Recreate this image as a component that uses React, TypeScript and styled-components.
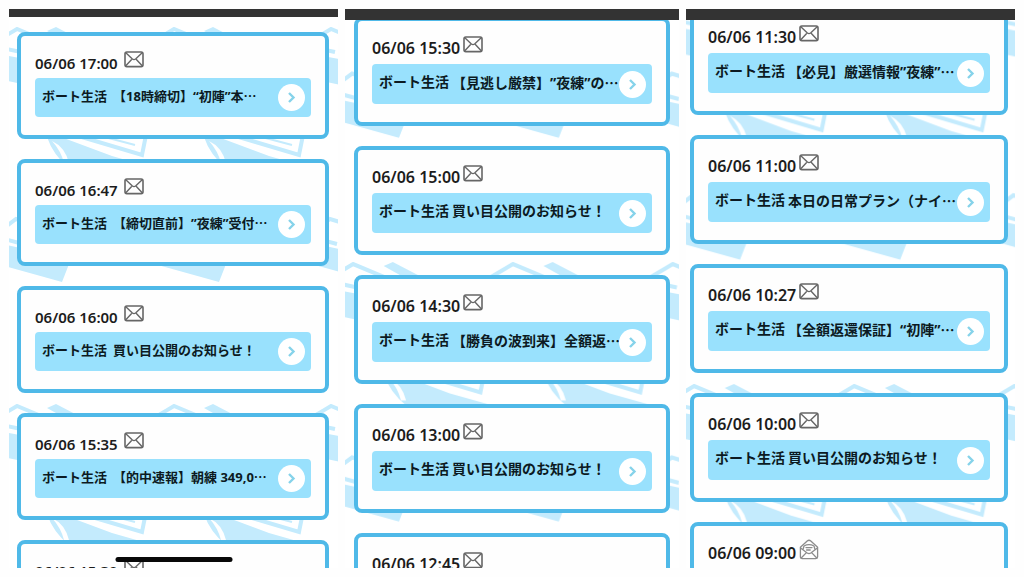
import React, { useId } from "react";
import styled, { createGlobalStyle } from "styled-components";

type Mail = { time: string; subject?: string; cut?: boolean; opened?: boolean };
type Density = "compact" | "regular";

const GlobalStyle = createGlobalStyle`
  * { box-sizing: border-box; }
  body { margin: 0; background: #fefefe; }
`;

const Page = styled.main`
  display: grid;
  grid-template-columns: 329fr 334fr 329fr;
  gap: 7px;
  height: 100vh;
  padding: 9px;
  font-family: "Noto Sans", "Noto Sans CJK JP", sans-serif;
  color: #1c1c1c;
`;

const Screen = styled.section`
  position: relative;
  display: flex;
  flex-direction: column;
  min-width: 0;
  min-height: 0;
  overflow: hidden;
  background: #ffffff;
`;

const Backdrop = styled.svg`
  position: absolute;
  inset: 0;
  width: 100%;
  height: 100%;
`;

const TopBar = styled.div<{ $height: number }>`
  position: relative;
  z-index: 1;
  flex: none;
  height: ${(p) => p.$height}px;
  background: #333333;
`;

const MailList = styled.ul<{ $top: number; $left: number; $right: number }>`
  position: relative;
  flex: none;
  display: flex;
  flex-direction: column;
  gap: 20px;
  margin: ${(p) => p.$top}px ${(p) => p.$right}px 0 ${(p) => p.$left}px;
  padding: 0;
  list-style: none;
`;

const Card = styled.li`
  min-height: 107px;
  padding: 12px 14px 18px;
  border: 4px solid #4fb9e8;
  border-radius: 8px;
  background: #fefefe;
`;

const DateRow = styled.div<{ $density: Density }>`
  display: flex;
  align-items: flex-start;
  gap: ${(p) => (p.$density === "compact" ? 6 : 3)}px;
  height: ${(p) => (p.$density === "compact" ? 30 : 31)}px;
`;

const Stamp = styled.time<{ $density: Density }>`
  padding-top: 5px;
  font-size: ${(p) => (p.$density === "compact" ? 15 : 16)}px;
  line-height: 20px;
  font-weight: 600;
  white-space: nowrap;
`;

const IconSlot = styled.span<{ $opened?: boolean }>`
  display: flex;
  padding-top: ${(p) => (p.$opened ? 1 : 3)}px;
`;

const SubjectLink = styled.a<{ $density: Density }>`
  display: flex;
  align-items: center;
  justify-content: space-between;
  height: ${(p) => (p.$density === "compact" ? 39 : 40)}px;
  padding: 0 6px 0 7px;
  border-radius: 4px;
  background: #99e1fd;
  color: #0c1a22;
  text-decoration: none;
`;

const Title = styled.span<{ $density: Density }>`
  display: flex;
  gap: ${(p) => (p.$density === "compact" ? 6 : 3)}px;
  min-width: 0;
  padding-bottom: 4px;
  font-size: ${(p) => (p.$density === "compact" ? 13 : 14)}px;
  line-height: 20px;
  font-weight: 700;
  white-space: nowrap;
  text-spacing-trim: space-all;
`;

const Dots = styled.span`
  font-family: "Noto Sans CJK JP", sans-serif;
`;

const Arrow = styled.span`
  display: flex;
  flex: none;
  align-items: center;
  justify-content: center;
  width: 27px;
  height: 27px;
  border-radius: 50%;
  background: #ffffff;
`;

const HomeIndicator = styled.div`
  position: absolute;
  bottom: 6px;
  left: 50%;
  width: 117px;
  height: 5px;
  border-radius: 3px;
  background: #080808;
  transform: translateX(-50%);
`;

function ClosedMail() {
  return (
    <svg width="20" height="17" viewBox="0 0 20 17" fill="none" stroke="#666" strokeWidth="1.6" strokeLinecap="round" strokeLinejoin="round" aria-hidden="true">
      <rect x="1" y="1" width="18" height="14.6" rx="1.8" />
      <path d="M1.8 1.8 8.4 8q1.6 1.3 3.2 0L18.2 1.8M1.8 14.8l5.6-6M18.2 14.8l-5.6-6" strokeWidth="1.4" />
    </svg>
  );
}

function OpenedMail() {
  return (
    <svg width="20" height="21" viewBox="0 0 20 21" fill="none" stroke="#8c8c8c" strokeWidth="1.3" strokeLinecap="round" strokeLinejoin="round" aria-hidden="true">
      <path d="M1.4 8.2 8.2 2q1.8-1.5 3.6 0l6.8 6.2v9.6q0 1.8-1.8 1.8H3.2q-1.8 0-1.8-1.8z" />
      <path d="M4 10.6 5 7q5-2.6 10 0l1 3.6M1.6 9l6.6 5q1.8 1.2 3.6 0l6.6-5M2.2 19l5.2-5.4M17.8 19l-5.2-5.4" />
      <path d="M7 8.6h6M7.6 11h3.6" />
    </svg>
  );
}

function Chevron() {
  return (
    <svg width="9" height="13" viewBox="0 0 9 13" fill="none" stroke="#86d3ea" strokeWidth="2.4" aria-hidden="true">
      <path d="M2 2 6.5 6.5 2 11" />
    </svg>
  );
}

function Books() {
  return (
    <g>
      <g fill="none" stroke="#c4ebfd" strokeWidth="4">
        <path d="M-14 15 8 2 44 17" />
        <path d="M-12 20 12 25" />
        <path d="M-12 206 7 192 30 199" />
        <path d="M-12 210 14 217" />
        <path d="M66 108 133 128 137 108" />
        <path d="M92 109 126 118" strokeWidth="2" />
      </g>
      <g fill="#c4ebfd">
        <path d="M38 4 47 0 72 13 56 14z" />
        <path d="M-10 27 32 35V61L-10 52z" />
        <path d="M38 110h14l51 19 42 12H60Q44 128 38 110z" />
        <path d="M-12 216 62 232 53 255-12 237z" />
      </g>
      <path d="M43 114q13 6 17 22h-5q-3-12-12-22z" fill="#ffffff" />
    </g>
  );
}

function BookPattern({ y, scale }: { y: number; scale: number }) {
  const id = useId();
  return (
    <Backdrop aria-hidden="true">
      <defs>
        <pattern id={id} width="157" height="377" patternUnits="userSpaceOnUse" patternTransform={`translate(0 ${y}) scale(${scale})`}>
          <Books />
          <g transform="translate(157 0)">
            <Books />
          </g>
        </pattern>
      </defs>
      <rect width="100%" height="100%" fill={`url(#${id})`} />
    </Backdrop>
  );
}

function MailCard({ mail, density }: { mail: Mail; density: Density }) {
  return (
    <Card>
      <DateRow $density={density}>
        <Stamp $density={density}>06/06 {mail.time}</Stamp>
        <IconSlot $opened={mail.opened}>{mail.opened ? <OpenedMail /> : <ClosedMail />}</IconSlot>
      </DateRow>
      {mail.subject && (
        <SubjectLink href="#" $density={density}>
          <Title $density={density}>
            <span>ボート生活</span>
            <span>
              {mail.subject}
              {mail.cut && <Dots>…</Dots>}
            </span>
          </Title>
          <Arrow>
            <Chevron />
          </Arrow>
        </SubjectLink>
      )}
    </Card>
  );
}

type ScreenData = {
  bar: number;
  top: number;
  left: number;
  right: number;
  density: Density;
  patternY: number;
  patternScale: number;
  home?: boolean;
  mails: Mail[];
};

const screens: ScreenData[] = [
  {
    bar: 8, top: 15, left: 8, right: 9, density: "compact", patternY: 18, patternScale: 1, home: true,
    mails: [
      { time: "17:00", subject: "【18時締切】“初陣”本", cut: true },
      { time: "16:47", subject: "【締切直前】”夜練”受付", cut: true },
      { time: "16:00", subject: "買い目公開のお知らせ！" },
      { time: "15:35", subject: "【的中速報】朝練 349,0", cut: true },
      { time: "15:30" },
    ],
  },
  {
    bar: 11, top: -3, left: 9, right: 9, density: "regular", patternY: 253, patternScale: 1.018,
    mails: [
      { time: "15:30", subject: "【見逃し厳禁】”夜練”の", cut: true },
      { time: "15:00", subject: "買い目公開のお知らせ！" },
      { time: "14:30", subject: "【勝負の波到来】全額返", cut: true },
      { time: "13:00", subject: "買い目公開のお知らせ！" },
      { time: "12:45" },
    ],
  },
  {
    bar: 11, top: -14, left: 4, right: 7, density: "regular", patternY: 375, patternScale: 1.02,
    mails: [
      { time: "11:30", subject: "【必見】厳選情報”夜練”", cut: true },
      { time: "11:00", subject: "本日の日常プラン（ナイ", cut: true },
      { time: "10:27", subject: "【全額返還保証】“初陣”", cut: true },
      { time: "10:00", subject: "買い目公開のお知らせ！" },
      { time: "09:00", opened: true },
    ],
  },
];

export default function App() {
  return (
    <>
      <GlobalStyle />
      <Page lang="ja">
        {screens.map((s) => (
          <Screen key={s.mails[0].time}>
            <BookPattern y={s.patternY} scale={s.patternScale} />
            <TopBar $height={s.bar} />
            <MailList $top={s.top} $left={s.left} $right={s.right}>
              {s.mails.map((m) => (
                <MailCard key={m.time} mail={m} density={s.density} />
              ))}
            </MailList>
            {s.home && <HomeIndicator />}
          </Screen>
        ))}
      </Page>
    </>
  );
}
